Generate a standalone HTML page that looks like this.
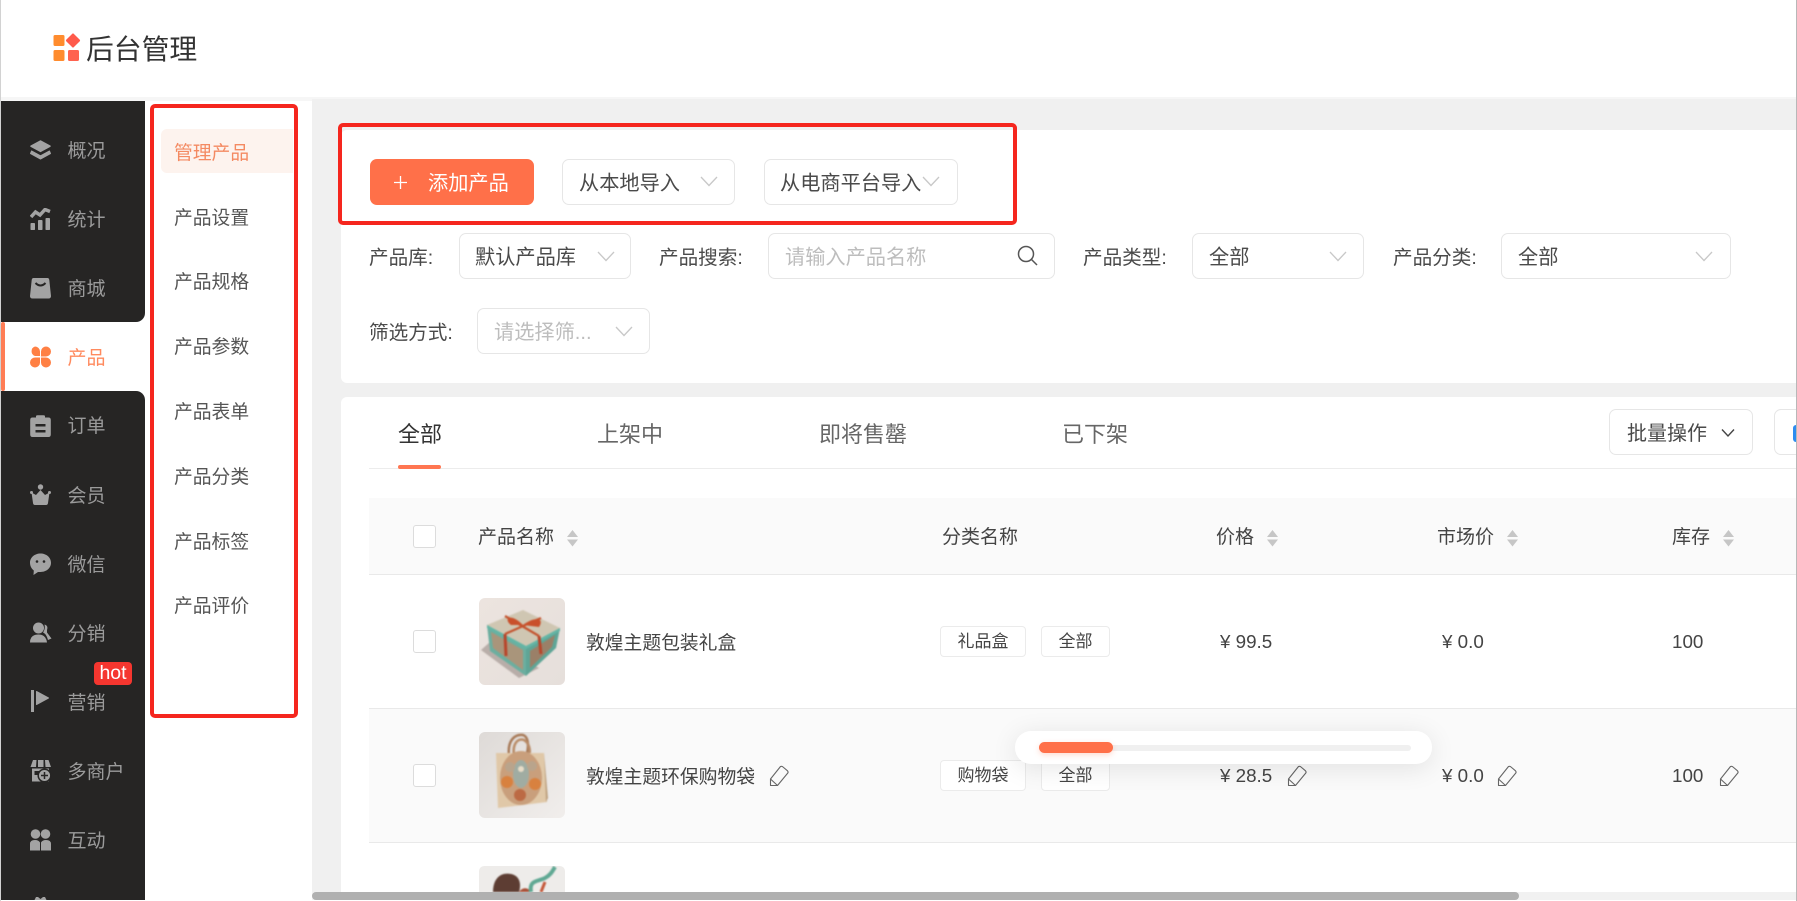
<!DOCTYPE html>
<html lang="zh-CN">
<head>
<meta charset="utf-8">
<title>后台管理</title>
<style>
*{box-sizing:border-box;margin:0;padding:0}
html,body{width:1797px;height:901px;overflow:hidden;background:#fff}
body{position:relative;font-family:"Liberation Sans","Noto Sans CJK SC",sans-serif;color:#444}
.a,.t,svg.i,.box{position:absolute}
.t{white-space:nowrap;line-height:30px;height:30px;margin-top:1px}
.s{font-size:19px;color:#9b9b9b;margin-top:2px;margin-left:-.5px}
.m{font-size:18.800px;color:#555;margin-top:2px}
.l{font-size:19.600px;color:#4a4a4a}
.v{font-size:20.200px;color:#4a4a4a}
.p{font-size:20.200px;color:#bdbdbd}
.tab{font-size:22px;color:#666;margin-top:2px}
.h{font-size:19px;color:#444;margin-top:2px}
.d{font-size:18.800px;color:#444}
.box{background:#fff;border:1px solid #e6e6e6;border-radius:7px}
.tag{position:absolute;background:#fff;border:1px solid #ebebeb;border-radius:4px;height:31px;line-height:29px;text-align:center;font-size:17px;color:#444}
.cb{position:absolute;left:413px;width:23px;height:23px;background:#fff;border:1px solid #dcdcdc;border-radius:3px}
.ph{filter:blur(.7px)}
</style>
</head>
<body>
<!-- header -->
<div class="a" style="left:0;top:0;width:1797px;height:99px;background:#fff"></div>
<svg class="i" style="left:50px;top:30px" width="32" height="34" viewBox="0 0 32 34">
<rect x="3.500" y="5" width="11" height="11" rx="1.500" fill="#ff8c2e"/>
<rect x="3.500" y="20" width="11" height="11" rx="1.500" fill="#ff8c2e"/>
<rect x="18" y="20" width="11" height="11" rx="1.500" fill="#ff6350"/>
<rect x="17.700" y="5.200" width="10.600" height="10.600" rx="1" transform="rotate(45 23 10.500)" fill="#ff5a4b"/>
</svg>
<div class="t" style="left:86px;top:34px;font-size:27.800px;color:#333">后台管理</div>

<!-- backgrounds -->
<div class="a" style="left:0;top:97px;width:1797px;height:4px;background:#f6f6f6"></div>
<div class="a" style="left:145px;top:101px;width:167px;height:800px;background:#fff"></div>
<div class="a" style="left:312px;top:99px;width:1485px;height:802px;background:#f0f0f0"></div>
<div class="a" style="left:341px;top:130px;width:1456px;height:253px;background:#fff;border-radius:6px 0 0 6px"></div>
<div class="a" style="left:341px;top:397px;width:1456px;height:504px;background:#fff;border-radius:6px 0 0 0"></div>

<!-- sidebar -->
<div class="a" style="left:1px;top:101px;width:144px;height:221px;background:#262524;border-bottom-right-radius:9px"></div>
<div class="a" style="left:1px;top:391px;width:144px;height:510px;background:#262524;border-top-right-radius:9px"></div>
<div class="a" style="left:1px;top:322px;width:4px;height:69px;background:#ff7d55;border-radius:2px"></div>

<svg class="i" style="left:30px;top:140px" width="21" height="20" viewBox="0 0 21 20"><path d="M10.500 1 20 6.200 10.500 11.400 1 6.200Z" fill="#a3a3a3" stroke="#a3a3a3" stroke-linejoin="round" stroke-width="1.500"/><path d="M1.500 11 10.500 15.800 19.500 11 20.500 13.500 10.500 19 .5 13.500Z" fill="#a3a3a3" stroke="#a3a3a3" stroke-linejoin="round"/></svg>
<div class="t s" style="left:68px;top:135px">概况</div>

<svg class="i" style="left:30px;top:208px" width="21" height="22" viewBox="0 0 21 22"><path d="M1 9 5.500 4 10 7 15 1.500 20 3.500" fill="none" stroke="#a3a3a3" stroke-width="3.500"/><rect x=".5" y="15" width="4.500" height="7" rx=".8" fill="#a3a3a3"/><rect x="8" y="12" width="4.500" height="10" rx=".8" fill="#a3a3a3"/><rect x="15.500" y="10" width="4.500" height="12" rx=".8" fill="#a3a3a3"/></svg>
<div class="t s" style="left:68px;top:204px">统计</div>

<svg class="i" style="left:30px;top:277px" width="21" height="22" viewBox="0 0 21 22"><path d="M3.500 1H17.500Q19 1 19.300 3L21 19Q21 21.500 18.500 21.500H2.500Q0 21.500 0 19L1.700 3Q2 1 3.500 1Z" fill="#a3a3a3"/><path d="M5.500 6Q10.500 11 15.500 6" fill="none" stroke="#262524" stroke-width="2"/></svg>
<div class="t s" style="left:68px;top:273px">商城</div>

<svg class="i" style="left:30px;top:346px" width="21" height="22" viewBox="0 0 21 22"><path d="M5 0.500A5 5 0 0 1 10 5.500V10H5A5 5 0 0 1 5 0.500ZM16 .5A5 5 0 0 1 16 10.500H11V5.500A5 5 0 0 1 16 .5ZM5 11.500H10V16.500A5 5 0 1 1 5 11.500ZM11 11.500H16A5 5 0 1 1 11 16.500Z" fill="#ff8044"/></svg>
<div class="t s" style="left:68px;top:342px;color:#ff8a5e">产品</div>

<svg class="i" style="left:30px;top:415px" width="21" height="22" viewBox="0 0 21 22"><path d="M2.500 2.500H6V1.500Q6 .3 7.500.3H13.500Q15 .3 15 1.500V2.500H18.500Q20.800 2.500 20.800 5V19.500Q20.800 22 18.500 22H2.500Q.2 22 .2 19.500V5Q.2 2.500 2.500 2.500Z" fill="#a3a3a3"/><rect x="5.500" y="9" width="10" height="2.500" fill="#262524"/><rect x="5.500" y="15" width="10" height="2.500" fill="#262524"/></svg>
<div class="t s" style="left:68px;top:410px">订单</div>

<svg class="i" style="left:30px;top:484px" width="21" height="22" viewBox="0 0 21 22"><circle cx="10.500" cy="3" r="2.700" fill="#a3a3a3"/><circle cx="1.500" cy="8.500" r="1.500" fill="#a3a3a3"/><circle cx="19.500" cy="8.500" r="1.500" fill="#a3a3a3"/><path d="M1.500 8.500 6 11 10.500 6 15 11 19.500 8.500 18 19Q17.800 21 16 21H5Q3.200 21 3 19Z" fill="#a3a3a3"/></svg>
<div class="t s" style="left:68px;top:480px">会员</div>

<svg class="i" style="left:30px;top:553px" width="21" height="22" viewBox="0 0 21 22"><path d="M10.500.5C16.300.5 21 4.400 21 9.800 21 15.200 16.300 19 10.500 19L8 19 3.500 22 3.800 17.500C1.500 15.700 0 13 0 9.800 0 4.400 4.700.5 10.500.5Z" fill="#a3a3a3"/><circle cx="7" cy="8.500" r="1.300" fill="#262524"/><circle cx="14" cy="8.500" r="1.300" fill="#262524"/></svg>
<div class="t s" style="left:68px;top:549px">微信</div>

<svg class="i" style="left:30px;top:622px" width="22" height="21" viewBox="0 0 22 21"><circle cx="8.500" cy="6" r="5.500" fill="#a3a3a3"/><path d="M0 20.500Q0 12.500 8.500 12.500 16 12.500 17 20.500Z" fill="#a3a3a3"/><path d="M14.500 2.500Q18.500 3.500 17 8L17 10.500 21.500 16.500 18 18Q16.500 12 13 10.500 15.500 7 14.500 2.500Z" fill="#a3a3a3"/></svg>
<div class="t s" style="left:68px;top:618px">分销</div>

<svg class="i" style="left:31px;top:690px" width="20" height="22" viewBox="0 0 20 22"><rect x="0" y="0" width="3" height="22" fill="#a3a3a3"/><path d="M5.500 1.500 17.500 8 5.500 14.500Z" fill="#a3a3a3" stroke="#a3a3a3" stroke-linejoin="round"/></svg>
<div class="t s" style="left:68px;top:687px">营销</div>
<div class="a" style="left:94px;top:662px;width:38px;height:23px;background:#f5362f;border-radius:4px;color:#fff;font-size:19.500px;line-height:22px;text-align:center">hot</div>

<svg class="i" style="left:30px;top:760px" width="22" height="22" viewBox="0 0 22 22"><path d="M3 0H6.500L6 7H.5ZM8 0H13.500V7H8ZM15 0H18.500L21 7H15.500Z" fill="#a3a3a3"/><path d="M2 8.500H19V21.500H2Z" fill="#a3a3a3"/><rect x="4.500" y="11" width="4.500" height="4" fill="#262524"/><circle cx="14.500" cy="15.500" r="6.300" fill="#a3a3a3" stroke="#262524" stroke-width="1.500"/><path d="M14.500 12V19M11 15.500H18" stroke="#262524" stroke-width="1.500"/></svg>
<div class="t s" style="left:68px;top:756px">多商户</div>

<svg class="i" style="left:30px;top:829px" width="21" height="22" viewBox="0 0 21 22"><circle cx="5.500" cy="5" r="4.800" fill="#a3a3a3"/><circle cx="15.500" cy="5" r="4.800" fill="#a3a3a3"/><path d="M0 21.500V15Q0 11 5 11 8.500 11 10 13.500V21.500ZM11 21.500V13.500Q12.500 11 16 11 21 11 21 15V21.500Z" fill="#a3a3a3"/></svg>
<div class="t s" style="left:68px;top:825px">互动</div>

<svg class="i" style="left:33px;top:897px" width="15" height="4" viewBox="0 0 15 4"><path d="M1 4 3 0H5L7.500 2 10 0H12L14 4Z" fill="#a3a3a3"/></svg>

<!-- submenu -->
<div class="a" style="left:161px;top:129px;width:132px;height:44px;background:#fdf3ee;border-radius:6px 0 0 6px"></div>
<div class="t m" style="left:174px;top:136px;color:#f48a62">管理产品</div>
<div class="t m" style="left:174px;top:201px">产品设置</div>
<div class="t m" style="left:174px;top:265px">产品规格</div>
<div class="t m" style="left:174px;top:330px">产品参数</div>
<div class="t m" style="left:174px;top:395px">产品表单</div>
<div class="t m" style="left:174px;top:460px">产品分类</div>
<div class="t m" style="left:174px;top:525px">产品标签</div>
<div class="t m" style="left:174px;top:589px">产品评价</div>

<!-- action row -->
<div class="a" style="left:370px;top:159px;width:164px;height:46px;background:#ff7049;border-radius:7px"></div>
<svg class="i" style="left:393px;top:175px" width="15" height="15" viewBox="0 0 15 15"><path d="M7.500 1V14M1 7.500H14" stroke="#fff" stroke-width="1.300"/></svg>
<div class="t v" style="left:428px;top:168px;color:#fff">添加产品</div>
<div class="box" style="left:562px;top:159px;width:173px;height:46px"></div>
<div class="t v" style="left:579px;top:168px">从本地导入</div>
<div class="box" style="left:764px;top:159px;width:194px;height:46px"></div>
<div class="t v" style="left:780px;top:168px">从电商平台导入</div>

<!-- filters -->
<div class="t l" style="left:369px;top:242px">产品库:</div>
<div class="box" style="left:459px;top:233px;width:172px;height:46px"></div>
<div class="t v" style="left:475px;top:242px">默认产品库</div>
<div class="t l" style="left:659px;top:242px">产品搜索:</div>
<div class="box" style="left:768px;top:233px;width:287px;height:46px"></div>
<div class="t p" style="left:785px;top:242px">请输入产品名称</div>
<svg class="i" style="left:1017px;top:245px" width="21" height="21" viewBox="0 0 21 21"><circle cx="9" cy="9" r="7.500" fill="none" stroke="#555" stroke-width="1.500"/><path d="M14.500 14.500 20 20" stroke="#555" stroke-width="1.500"/></svg>
<div class="t l" style="left:1083px;top:242px">产品类型:</div>
<div class="box" style="left:1192px;top:233px;width:172px;height:46px"></div>
<div class="t v" style="left:1209px;top:242px">全部</div>
<div class="t l" style="left:1393px;top:242px">产品分类:</div>
<div class="box" style="left:1501px;top:233px;width:230px;height:46px"></div>
<div class="t v" style="left:1518px;top:242px">全部</div>
<div class="t l" style="left:369px;top:317px">筛选方式:</div>
<div class="box" style="left:477px;top:308px;width:173px;height:46px"></div>
<div class="t p" style="left:494px;top:317px">请选择筛...</div>

<!-- chevrons -->
<svg class="i" style="left:700px;top:176px" width="18" height="11" viewBox="0 0 18 11"><path d="M1 1 9 9.500 17 1" fill="none" stroke="#c8c8c8" stroke-width="1.300"/></svg>
<svg class="i" style="left:922px;top:176px" width="18" height="11" viewBox="0 0 18 11"><path d="M1 1 9 9.500 17 1" fill="none" stroke="#c8c8c8" stroke-width="1.300"/></svg>
<svg class="i" style="left:597px;top:251px" width="18" height="11" viewBox="0 0 18 11"><path d="M1 1 9 9.500 17 1" fill="none" stroke="#c8c8c8" stroke-width="1.300"/></svg>
<svg class="i" style="left:1329px;top:251px" width="18" height="11" viewBox="0 0 18 11"><path d="M1 1 9 9.500 17 1" fill="none" stroke="#c8c8c8" stroke-width="1.300"/></svg>
<svg class="i" style="left:1695px;top:251px" width="18" height="11" viewBox="0 0 18 11"><path d="M1 1 9 9.500 17 1" fill="none" stroke="#c8c8c8" stroke-width="1.300"/></svg>
<svg class="i" style="left:615px;top:326px" width="18" height="11" viewBox="0 0 18 11"><path d="M1 1 9 9.500 17 1" fill="none" stroke="#c8c8c8" stroke-width="1.300"/></svg>

<!-- red annotation boxes -->
<div class="a" style="left:150px;top:104px;width:148px;height:614px;border:4px solid #f5261e;border-radius:5px"></div>
<div class="a" style="left:338px;top:123px;width:679px;height:102px;border:4px solid #f5261e;border-radius:5px"></div>

<!-- tabs -->
<div class="t tab" style="left:398px;top:418px;color:#333">全部</div>
<div class="t tab" style="left:597px;top:418px">上架中</div>
<div class="t tab" style="left:819px;top:418px">即将售罄</div>
<div class="t tab" style="left:1062px;top:418px">已下架</div>
<div class="a" style="left:369px;top:468px;width:1428px;height:1px;background:#ececec"></div>
<div class="a" style="left:398px;top:465px;width:43px;height:4px;background:#ff7651;border-radius:2px"></div>
<div class="box" style="left:1609px;top:409px;width:144px;height:46px"></div>
<div class="t l" style="left:1627px;top:418px;font-size:20px">批量操作</div>
<svg class="i" style="left:1721px;top:428px" width="14" height="10" viewBox="0 0 14 10"><path d="M1 1.500 7 8 13 1.500" fill="none" stroke="#444" stroke-width="1.400"/></svg>
<div class="box" style="left:1774px;top:409px;width:40px;height:46px"></div>
<div class="a" style="left:1793px;top:425px;width:6px;height:17px;background:#2d8cf0;border-radius:3px 0 0 3px"></div>

<!-- table head -->
<div class="a" style="left:369px;top:498px;width:1428px;height:77px;background:#fafafa;border-bottom:1px solid #e9e9e9"></div>
<div class="cb" style="top:525px"></div>
<div class="t h" style="left:478px;top:521px">产品名称</div>
<svg class="i" style="left:566px;top:529px" width="13" height="18" viewBox="0 0 13 18"><path d="M6.500 1 12 8H1ZM1 10.500H12L6.500 17.500Z" fill="#c6c6c6"/></svg>
<div class="t h" style="left:942px;top:521px">分类名称</div>
<div class="t h" style="left:1216px;top:521px">价格</div>
<svg class="i" style="left:1266px;top:529px" width="13" height="18" viewBox="0 0 13 18"><path d="M6.500 1 12 8H1ZM1 10.500H12L6.500 17.500Z" fill="#c6c6c6"/></svg>
<div class="t h" style="left:1437px;top:521px">市场价</div>
<svg class="i" style="left:1506px;top:529px" width="13" height="18" viewBox="0 0 13 18"><path d="M6.500 1 12 8H1ZM1 10.500H12L6.500 17.500Z" fill="#c6c6c6"/></svg>
<div class="t h" style="left:1672px;top:521px">库存</div>
<svg class="i" style="left:1722px;top:529px" width="13" height="18" viewBox="0 0 13 18"><path d="M6.500 1 12 8H1ZM1 10.500H12L6.500 17.500Z" fill="#c6c6c6"/></svg>

<!-- row 1 -->
<div class="a" style="left:369px;top:708px;width:1428px;height:1px;background:#e9e9e9"></div>
<div class="cb" style="top:630px"></div>
<svg class="i" style="left:479px;top:598px" width="86" height="87" viewBox="0 0 86 87">
<defs><linearGradient id="g1" x1="0" y1="0" x2="1" y2="1"><stop offset="0" stop-color="#ece4df"/><stop offset="1" stop-color="#e6dfdb"/></linearGradient><clipPath id="c1"><rect width="86" height="87" rx="6"/></clipPath></defs>
<rect width="86" height="87" rx="6" fill="url(#g1)"/>
<g clip-path="url(#c1)"><g class="ph">
<path d="M2 52 40 80 60 70 11 44Z" fill="#8f837d" opacity=".55"/>
<path d="M8 27 44 12 81 30 47 48Z" fill="#cfc6b2"/>
<path d="M8 27 47 48 47 78 11 53Z" fill="#6cae9f"/>
<path d="M47 48 81 30 77 50 47 78Z" fill="#5fa596"/>
<path d="M12 34 44 52 44 72 14 50Z" fill="#b98e72" opacity=".8"/>
<path d="M51 53 76 37 73 49 51 70Z" fill="#a9775c" opacity=".8"/>
<path d="M8 27 47 48 81 30 81 33 47 51 8 30Z" fill="#64b5a5"/>
<path d="M26 18 60 38M62 20 26 36" stroke="#c4532e" stroke-width="2.200" fill="none"/>
<path d="M26 36 27 58M60 38 62 56" stroke="#b8452a" stroke-width="3" fill="none"/>
<path d="M44 27 C31 14 24 21 32 27Z M44 27 C56 18 66 20 60 29Z" fill="#c9502b"/>
</g></g>
</svg>
<div class="t d" style="left:586px;top:627px">敦煌主题包装礼盒</div>
<div class="tag" style="left:940px;top:626px;width:86px">礼品盒</div>
<div class="tag" style="left:1041px;top:626px;width:69px">全部</div>
<div class="t d" style="left:1220px;top:626px">¥ 99.5</div>
<div class="t d" style="left:1442px;top:626px">¥ 0.0</div>
<div class="t d" style="left:1672px;top:626px">100</div>

<!-- row 2 -->
<div class="a" style="left:369px;top:709px;width:1428px;height:133px;background:#fafafa"></div>
<div class="a" style="left:369px;top:842px;width:1428px;height:1px;background:#e9e9e9"></div>
<div class="cb" style="top:764px"></div>
<svg class="i" style="left:479px;top:732px" width="86" height="86" viewBox="0 0 86 86">
<defs><linearGradient id="g2" x1="0" y1="0" x2="1" y2="1"><stop offset="0" stop-color="#dedad7"/><stop offset="1" stop-color="#f1eeec"/></linearGradient></defs>
<rect width="86" height="86" rx="6" fill="url(#g2)"/>
<g class="ph">
<path d="M30 24C28 6 38 2 44 3 50 5 50 16 47 24" fill="none" stroke="#a87a58" stroke-width="2.500"/>
<path d="M35 24C33 10 40 6 45 8 50 11 52 18 50 24" fill="none" stroke="#b98c68" stroke-width="2.500"/>
<path d="M17 21 65 21 68 70 19 76Z" fill="#e0c8a8"/>
<path d="M65 21 69 66 67 70Z" fill="#bda17f"/>
<ellipse cx="42" cy="46" rx="21" ry="27" fill="#c99f7c"/>
<ellipse cx="42" cy="42" rx="8" ry="14" fill="#a0aca2"/>
<circle cx="28" cy="50" r="6" fill="#d8813f"/>
<circle cx="56" cy="52" r="6" fill="#d8813f"/>
<circle cx="31" cy="35" r="5" fill="#b9a48c"/>
<circle cx="53" cy="34" r="5" fill="#b9a48c"/>
<circle cx="41" cy="63" r="6" fill="#bc6a44"/>
<circle cx="42" cy="37" r="3" fill="#e8dcc8"/>
</g>
</svg>
<div class="t d" style="left:586px;top:761px">敦煌主题环保购物袋</div>
<svg class="i" style="left:769px;top:765px" width="21" height="22" viewBox="0 0 21 22"><path d="M1.500 20.500V14L11.500 1.500Q13 1 14 2L18.500 5.800Q19.500 7 18.800 8L8.500 20.500ZM1.500 14 8.500 20.500" fill="none" stroke="#666" stroke-width="1.100" stroke-linejoin="round"/></svg>
<div class="tag" style="left:940px;top:760px;width:86px">购物袋</div>
<div class="tag" style="left:1041px;top:760px;width:69px">全部</div>
<div class="t d" style="left:1220px;top:760px">¥ 28.5</div>
<svg class="i" style="left:1287px;top:765px" width="21" height="22" viewBox="0 0 21 22"><path d="M1.500 20.500V14L11.500 1.500Q13 1 14 2L18.500 5.800Q19.500 7 18.800 8L8.500 20.500ZM1.500 14 8.500 20.500" fill="none" stroke="#666" stroke-width="1.100" stroke-linejoin="round"/></svg>
<div class="t d" style="left:1442px;top:760px">¥ 0.0</div>
<svg class="i" style="left:1497px;top:765px" width="21" height="22" viewBox="0 0 21 22"><path d="M1.500 20.500V14L11.500 1.500Q13 1 14 2L18.500 5.800Q19.500 7 18.800 8L8.500 20.500ZM1.500 14 8.500 20.500" fill="none" stroke="#666" stroke-width="1.100" stroke-linejoin="round"/></svg>
<div class="t d" style="left:1672px;top:760px">100</div>
<svg class="i" style="left:1719px;top:765px" width="21" height="22" viewBox="0 0 21 22"><path d="M1.500 20.500V14L11.500 1.500Q13 1 14 2L18.500 5.800Q19.500 7 18.800 8L8.500 20.500ZM1.500 14 8.500 20.500" fill="none" stroke="#666" stroke-width="1.100" stroke-linejoin="round"/></svg>

<!-- row 3 image -->
<svg class="i" style="left:479px;top:866px" width="86" height="26" viewBox="0 0 86 26">
<path d="M0 26V6Q0 0 6 0H80Q86 0 86 6V26Z" fill="#eeecea"/>
<g class="ph">
<path d="M14 26C14 12 22 6 32 8 42 10 42 20 40 26Z" fill="#5d3d33"/>
<path d="M40 26C44 20 50 22 52 26Z" fill="#a85038"/>
<path d="M52 26C50 14 58 16 66 12 72 9 74 4 76 1" fill="none" stroke="#5fa893" stroke-width="4"/>
<path d="M62 26 66 16" stroke="#c4583a" stroke-width="3"/>
</g>
</svg>

<!-- progress popup -->
<div class="a" style="left:1015px;top:731px;width:417px;height:33px;background:#fff;border-radius:16px;box-shadow:0 4px 26px rgba(0,0,0,.1)"></div>
<div class="a" style="left:1039px;top:745px;width:372px;height:6px;background:#f0f0f0;border-radius:3px"></div>
<div class="a" style="left:1039px;top:742px;width:74px;height:10.500px;background:#ff7049;border-radius:6px;box-shadow:0 2px 6px rgba(255,112,73,.25)"></div>

<!-- horizontal scrollbar -->
<div class="a" style="left:312px;top:892px;width:1485px;height:8px;background:#f1f1f1"></div>
<div class="a" style="left:312px;top:892px;width:1207px;height:8px;background:#b0b0b0;border-radius:4px"></div>
<div class="a" style="left:0;top:900px;width:1797px;height:1px;background:#fff"></div>

<!-- window edges -->
<div class="a" style="left:0;top:0;width:1px;height:901px;background:#d2d2d2"></div>
<div class="a" style="left:1796px;top:0;width:1px;height:901px;background:#b8b8b8"></div>
</body>
</html>
